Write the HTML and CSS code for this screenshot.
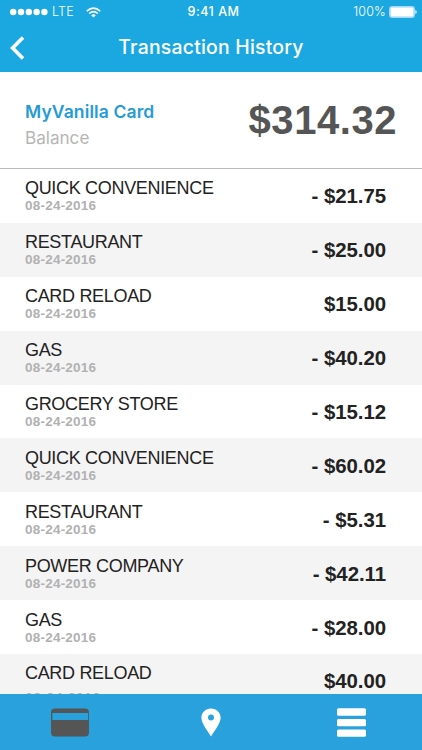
FILE: index.html
```html
<!DOCTYPE html>
<html lang="en">
<head>
<meta charset="utf-8">
<title>Transaction History</title>
<link rel="stylesheet" href="styles.css">
</head>
<body>
<div class="app">
  <header class="header">
    <div class="status">
      <div class="carrier">
        <svg class="signal" width="38" height="8" viewBox="0 0 38 8" fill="currentColor"><circle cx="3.2" cy="4" r="3.2"/><circle cx="11" cy="4" r="3.2"/><circle cx="18.8" cy="4" r="3.2"/><circle cx="26.6" cy="4" r="3.2"/><circle cx="34.4" cy="4" r="3.2"/></svg>
        <span class="network">LTE</span>
        <svg class="wifi" width="15" height="11" viewBox="0 0 15 11" fill="none" stroke="currentColor" stroke-width="1.6"><path d="M.8 4.1Q7.5-2 14.2 4.1M3.2 6.5Q7.5 2.7 11.8 6.5"/><path d="M7.5 10.6 5.2 8.2Q7.5 6.3 9.8 8.2Z" fill="currentColor" stroke="none"/></svg>
      </div>
      <span class="time">9:41 AM</span>
      <div class="power">
        <span class="percent">100%</span>
        <svg width="28" height="12" viewBox="0 0 28 12"><rect x=".5" y=".5" width="25" height="11" rx="2" fill="none" stroke="#a8dcf4"/><rect x="1.3" y="1.3" width="23.4" height="9.4" rx="1" fill="#fff"/><path d="M26.3 4Q27.8 4.5 27.8 6T26.3 8Z" fill="#e8f7fd"/></svg>
      </div>
    </div>
    <div class="nav">
      <svg class="back" width="15" height="24" viewBox="0 0 15 24" fill="none" stroke="currentColor" stroke-width="3.6"><path d="M13 1.4 2.6 12 13 22.6"/></svg>
      <h1 class="title">Transaction History</h1>
    </div>
  </header>
  <section class="balance">
    <div class="account">
      <div class="card-name">MyVanilla Card</div>
      <div class="label">Balance</div>
    </div>
    <div class="total">$314.32</div>
  </section>
  <main class="list">
    <div class="row"><div><div class="name">QUICK CONVENIENCE</div><div class="date">08-24-2016</div></div><div class="amount">- $21.75</div></div>
    <div class="row"><div><div class="name">RESTAURANT</div><div class="date">08-24-2016</div></div><div class="amount">- $25.00</div></div>
    <div class="row"><div><div class="name">CARD RELOAD</div><div class="date">08-24-2016</div></div><div class="amount">$15.00</div></div>
    <div class="row"><div><div class="name">GAS</div><div class="date">08-24-2016</div></div><div class="amount">- $40.20</div></div>
    <div class="row"><div><div class="name">GROCERY STORE</div><div class="date">08-24-2016</div></div><div class="amount">- $15.12</div></div>
    <div class="row"><div><div class="name">QUICK CONVENIENCE</div><div class="date">08-24-2016</div></div><div class="amount">- $60.02</div></div>
    <div class="row"><div><div class="name">RESTAURANT</div><div class="date">08-24-2016</div></div><div class="amount">- $5.31</div></div>
    <div class="row"><div><div class="name">POWER COMPANY</div><div class="date">08-24-2016</div></div><div class="amount">- $42.11</div></div>
    <div class="row"><div><div class="name">GAS</div><div class="date">08-24-2016</div></div><div class="amount">- $28.00</div></div>
    <div class="row"><div><div class="name">CARD RELOAD</div><div class="date">08-24-2016</div></div><div class="amount">$40.00</div></div>
  </main>
  <nav class="tabs">
    <svg width="38" height="29" viewBox="0 0 38 29"><path fill="#555" fill-rule="evenodd" d="M4 .5H34Q38 .5 38 4.5V24.5Q38 28.5 34 28.5H4Q0 28.5 0 24.5V4.5Q0 .5 4 .5ZM1.3 5V12H37.2V5Z"/></svg>
    <svg class="pin" width="20" height="29" viewBox="0 0 20 29"><path fill="#fff" fill-rule="evenodd" d="M10 .5C4.6.5.4 4.5.4 9.7.4 15 6 22 10 28.5 14 22 19.6 15 19.6 9.7 19.6 4.5 15.4.5 10 .5ZM10 6.6A3 3 0 1 1 10 12.6 3 3 0 0 1 10 6.6Z"/></svg>
    <svg width="29" height="29" viewBox="0 0 29 29" fill="#fff"><rect y=".3" width="29" height="7.4" rx="1.5"/><rect y="11" width="29" height="7.2" rx="1.5"/><rect y="21.4" width="29" height="7.4" rx="1.5"/></svg>
  </nav>
</div>
</body>
</html>
```
FILE: styles.css
```css
* { box-sizing: border-box; }
body { margin: 0; background: #fff; font-family: "Liberation Sans", Arial, sans-serif; }
svg { display: block; flex: none; }
.app { width: 422px; height: 750px; display: flex; flex-direction: column; overflow: hidden; }
.header { height: 72px; flex: none; background: #1ba8e1; color: #fff; font-family: Inter, sans-serif; }
.status { height: 24px; padding: 0 5px 0 10px; display: grid; grid-template-columns: 1fr auto 1fr; align-items: center; font-size: 12.5px; line-height: 24px; }
.carrier, .power { display: flex; align-items: center; }
.power { justify-content: flex-end; gap: 3px; }
.network { margin-left: 4px; font-weight: 300; letter-spacing: .2px; }
.wifi { margin-left: 12px; }
.time { font-weight: 500; letter-spacing: .5px; }
.percent { font-weight: 300; letter-spacing: .2px; }
.nav { height: 48px; padding-left: 10px; display: grid; grid-template-columns: 32px 1fr 42px; align-items: center; }
.title { margin: 0; font-size: 19.4px; line-height: 46px; padding-bottom: 2px; font-weight: 500; letter-spacing: .22px; text-align: center; }
.balance { height: 97px; flex: none; padding: 0 25px 0 25px; display: flex; align-items: center; justify-content: space-between; border-bottom: 1px solid #bcbcbc; font-family: Inter, sans-serif; }
.account { padding-top: 9px; }
.card-name { color: #269bd6; font-size: 17.5px; line-height: 26px; font-weight: 600; letter-spacing: .12px; }
.label { color: #b5b5b5; font-size: 17.1px; line-height: 26px; }
.total { color: #555; font: bold 40px/50px "Liberation Sans", Arial, sans-serif; letter-spacing: .55px; }
.list { flex: 1; min-height: 0; overflow: hidden; }
.row { height: 53.9px; padding: 9.4px 36px 0 25px; display: flex; justify-content: space-between; }
.row:nth-child(even) { background: #f4f4f4; }
.name { color: #222; font-size: 18px; line-height: 21px; letter-spacing: -.32px; }
.date { color: #b1b1b1; font-size: 13.5px; line-height: 14px; font-weight: bold; letter-spacing: .22px; }
.row:last-child .date { margin-top: 6.5px; font-size: 14.3px; }
.amount { color: #222; font-size: 20.4px; line-height: 36px; font-weight: bold; letter-spacing: -.05px; }
.tabs { height: 56px; flex: none; padding: 0 56px 0 51px; background: #29a1dd; display: flex; align-items: center; justify-content: space-between; }
.pin { margin-right: 5px; }
```
